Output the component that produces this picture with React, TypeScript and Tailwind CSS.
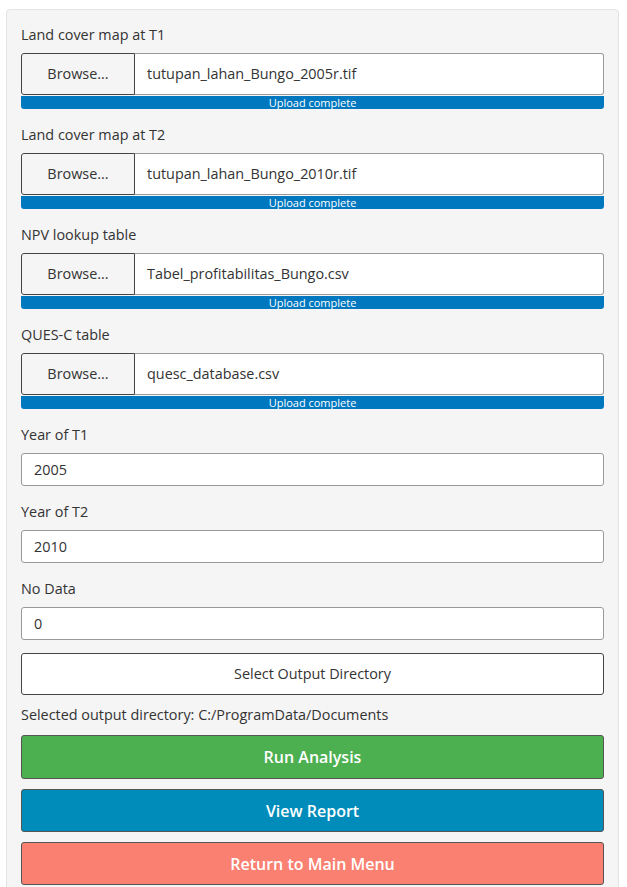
import React from 'react';

// ── File upload row ──────────────────────────────────────────────────────────

function FileInput({ label, file }: { label: string; file: string }) {
  return (
    <div className="mb-4">
      <label className="block h-5 leading-5 mb-2">{label}</label>
      <div className="flex h-[42px]">
        <button className="w-[114px] shrink-0 bg-[#f5f5f5] border border-[#444] rounded-l-[3px] text-[#333]">
          Browse...
        </button>
        <div className="flex-1 flex items-center px-3 bg-white border border-l-0 border-[#999] rounded-r-[3px] text-[#333]">
          {file}
        </div>
      </div>
      <div className="mt-px h-[13px] bg-[#0078c0] rounded-b-[3px] text-white text-[11px] leading-[13px] text-center">
        Upload complete
      </div>
    </div>
  );
}

function TextInput({ label, value }: { label: string; value: string }) {
  return (
    <div className="mb-4">
      <label className="block h-5 leading-5 mb-2">{label}</label>
      <div className="h-[33px] flex items-center px-3 bg-white border border-[#999] rounded-[3px] text-[#333]">
        {value}
      </div>
    </div>
  );
}

const FILES = [
  { label: 'Land cover map at T1', file: 'tutupan_lahan_Bungo_2005r.tif' },
  { label: 'Land cover map at T2', file: 'tutupan_lahan_Bungo_2010r.tif' },
  { label: 'NPV lookup table', file: 'Tabel_profitabilitas_Bungo.csv' },
  { label: 'QUES-C table', file: 'quesc_database.csv' },
];

const FIELDS = [
  { label: 'Year of T1', value: '2005' },
  { label: 'Year of T2', value: '2010' },
  { label: 'No Data', value: '0' },
];

export default function App() {
  return (
    <div className="w-[627px] h-[887px] overflow-hidden bg-white text-[14.4px] text-[#333]" style={{ fontFamily: '"Open Sans", "Noto Sans", sans-serif' }}>
      <div className="ml-[6px] mr-2 mt-[9px] pt-[15px] px-[14px] pb-5 bg-[#f5f5f5] border border-[#e3e3e3] rounded">
        {FILES.map((f) => <FileInput key={f.label} {...f} />)}
        {FIELDS.map((f) => <TextInput key={f.label} {...f} />)}

        <button className="-mt-[3px] w-full h-[42px] bg-white border border-[#444] rounded-[3px] text-[#333]">
          Select Output Directory
        </button>
        <div className="mt-[10px] h-5 leading-5">Selected output directory: C:/ProgramData/Documents</div>

        <div className="mt-[10px] flex flex-col gap-[10px]">
          <button className="h-[44px] w-full bg-[#4caf50] border border-[#555] rounded-[3px] text-white text-[16px] font-semibold">Run Analysis</button>
          <button className="h-[43px] w-full bg-[#008cba] border border-[#555] rounded-[3px] text-white text-[16px] font-semibold">View Report</button>
          <button className="h-[43px] w-full bg-[#fa8072] border border-[#555] rounded-[3px] text-white text-[16px] font-semibold">Return to Main Menu</button>
        </div>
      </div>
    </div>
  );
}
